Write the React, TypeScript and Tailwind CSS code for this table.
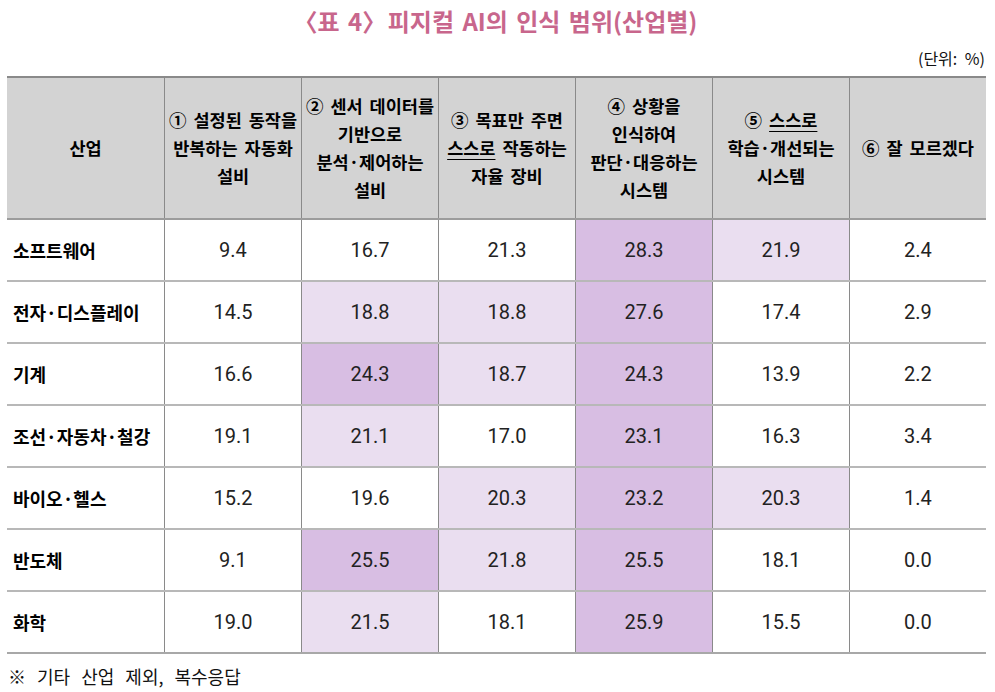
import React from "react";

type Shade = "" | "d" | "l";

const rows: { name: string; vals: [string, Shade][] }[] = [
  { name: "소프트웨어", vals: [["9.4", ""], ["16.7", ""], ["21.3", ""], ["28.3", "d"], ["21.9", "l"], ["2.4", ""]] },
  { name: "전자·디스플레이", vals: [["14.5", ""], ["18.8", "l"], ["18.8", "l"], ["27.6", "d"], ["17.4", ""], ["2.9", ""]] },
  { name: "기계", vals: [["16.6", ""], ["24.3", "d"], ["18.7", "l"], ["24.3", "d"], ["13.9", ""], ["2.2", ""]] },
  { name: "조선·자동차·철강", vals: [["19.1", ""], ["21.1", "l"], ["17.0", ""], ["23.1", "d"], ["16.3", ""], ["3.4", ""]] },
  { name: "바이오·헬스", vals: [["15.2", ""], ["19.6", ""], ["20.3", "l"], ["23.2", "d"], ["20.3", "l"], ["1.4", ""]] },
  { name: "반도체", vals: [["9.1", ""], ["25.5", "d"], ["21.8", "l"], ["25.5", "d"], ["18.1", ""], ["0.0", ""]] },
  { name: "화학", vals: [["19.0", ""], ["21.5", "l"], ["18.1", ""], ["25.9", "d"], ["15.5", ""], ["0.0", ""]] },
];

const U = ({ children }: { children: React.ReactNode }) => (
  <span className="underline decoration-[1px] underline-offset-[4px]">{children}</span>
);

const headers: React.ReactNode[][] = [
  [<>① 설정된 동작을</>, <>반복하는 자동화</>, <>설비</>],
  [<>② 센서 데이터를</>, <>기반으로</>, <>분석·제어하는</>, <>설비</>],
  [<>③ 목표만 주면</>, <><U>스스로</U> 작동하는</>, <>자율 장비</>],
  [<>④ 상황을</>, <>인식하여</>, <>판단·대응하는</>, <>시스템</>],
  [<>⑤ <U>스스로</U></>, <>학습·개선되는</>, <>시스템</>],
  [<>⑥ 잘 모르겠다</>],
];

export default function App() {
  return (
    <div className="w-[995px] h-[692px] bg-white text-[#111] font-['Noto_Sans_CJK_KR','Noto_Sans',sans-serif] overflow-hidden">
      <div className="h-[44px] flex items-center justify-center text-[24px] font-bold text-[#c8668c] [word-spacing:3px] pr-[4px] pb-[3px] whitespace-pre">
        <span className="mr-[-7px]">〈표 4〉</span>
        <span> 피지컬 AI의 인식 범위(산업별)</span>
      </div>
      <div className="h-[32px] flex items-center justify-end pb-[4px] pr-[10px] text-[16px] [word-spacing:4px]">
        (단위: %)
      </div>
      <div className="ml-[7px] w-[979px] border-t-2 border-[#8a8a8a]">
        <div className="grid grid-cols-[157px_repeat(6,137px)] h-[142px] bg-[#d3d3d3] border-b-2 border-[#9c9c9c] text-[17.5px] font-bold leading-[28px] [word-spacing:3px] text-black">
          <div className="flex items-center justify-center">산업</div>
          {headers.map((h, i) => (
            <div key={i} className="border-l border-[#8a8a8a] flex flex-col items-center justify-center text-center">
              {h.map((line, j) => (
                <div key={j} className="whitespace-nowrap">{line}</div>
              ))}
            </div>
          ))}
        </div>
        {rows.map((r, ri) => (
          <div
            key={ri}
            className={`grid grid-cols-[157px_repeat(6,137px)] h-[62px] border-b-2 ${ri === rows.length - 1 ? "border-[#a8a8a8]" : "border-[#b8b8b8]"}`}
          >
            <div className="flex items-center pl-[6px] text-[18px] font-bold whitespace-nowrap text-black">{r.name}</div>
            {r.vals.map(([v, s], ci) => (
              <div
                key={ci}
                className={`border-l border-[#8a8a8a] flex items-center justify-center font-['Roboto',sans-serif] text-[20px] text-[#222] ${s === "d" ? "bg-[#d8bee3]" : s === "l" ? "bg-[#eadef0]" : "bg-white"}`}
              >
                {v}
              </div>
            ))}
          </div>
        ))}
      </div>
      <div className="h-[44px] flex items-center pl-[8px] text-[18px] [word-spacing:7px]">
        ※ 기타 산업 제외, 복수응답
      </div>
    </div>
  );
}
